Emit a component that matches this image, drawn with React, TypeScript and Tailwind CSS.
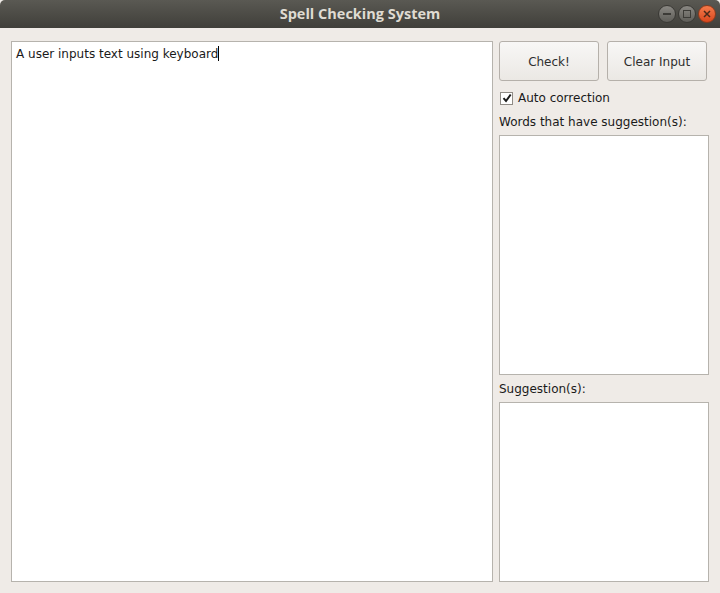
export default function App() {
  const font = { fontFamily: '"DejaVu Sans", sans-serif' };
  return (
    <div className="w-[720px] h-[593px] bg-[#efebe7] flex flex-col overflow-hidden" style={font}>
      <div className="h-[28px] shrink-0 bg-gradient-to-b from-[#5a5953] to-[#403f3a] flex items-center justify-center relative rounded-t-[5px]">
        <span className="text-[14.5px] font-bold text-[#dfdbd2]" style={{ fontFamily: '"Open Sans", sans-serif' }}>Spell Checking System</span>
        <div className="absolute right-[4px] top-[5px] flex gap-[2px]">
          <div className="w-[18px] h-[18px] rounded-full bg-gradient-to-b from-[#8a8883] to-[#5e5d58] border border-[#3a3935] flex items-center justify-center">
            <div className="w-[8px] h-[2px] bg-[#3c3b37]" />
          </div>
          <div className="w-[18px] h-[18px] rounded-full bg-gradient-to-b from-[#8a8883] to-[#5e5d58] border border-[#3a3935] flex items-center justify-center">
            <div className="w-[8px] h-[8px] border-[1.5px] border-[#3c3b37]" />
          </div>
          <div className="w-[18px] h-[18px] rounded-full bg-gradient-to-b from-[#f47a4a] to-[#d9461c] border border-[#8e3a1c] flex items-center justify-center">
            <svg width="8" height="8" viewBox="0 0 8 8"><path d="M1 1L7 7M7 1L1 7" stroke="#4a2a1a" strokeWidth="1.5" /></svg>
          </div>
        </div>
      </div>
      <div className="flex-1 flex pl-[11px] pt-[13px] gap-[6px] items-start">
        <div className="w-[482px] h-[541px] bg-white border border-[#b6b3ad] px-[4px] pt-[4px] text-[12px] leading-[16px] text-[#1a1a1a]">
          <span>A user inputs text using keyboard</span><span className="inline-block w-[1px] h-[15px] bg-black align-[-3px]" />
        </div>
        <div className="w-[210px] flex flex-col">
          <div className="flex gap-[8px]">
            <button className="w-[100px] h-[40px] rounded-[3px] border border-[#b5b0aa] bg-gradient-to-b from-[#f8f7f6] to-[#ebe8e4] text-[12px] leading-[16px] text-[#2e2e2e] pt-[2px]">Check!</button>
            <button className="w-[100px] h-[40px] rounded-[3px] border border-[#b5b0aa] bg-gradient-to-b from-[#f8f7f6] to-[#ebe8e4] text-[12px] leading-[16px] text-[#2e2e2e] pt-[2px]">Clear Input</button>
          </div>
          <div className="flex items-center mt-[10px] h-[14px]">
            <div className="w-[13px] h-[13px] bg-white border border-[#8f8b85] flex items-center justify-center ml-[1px]">
              <svg width="10" height="10" viewBox="0 0 10 10"><path d="M1.5 5.2L4 8L8.7 1.5" fill="none" stroke="#1a1a1a" strokeWidth="2" /></svg>
            </div>
            <span className="ml-[5px] text-[12px] leading-[16px] text-[#1a1a1a]">Auto correction</span>
          </div>
          <div className="mt-[9px] text-[12px] text-[#1a1a1a] leading-[16px]">Words that have suggestion(s):</div>
          <div className="mt-[5px] h-[240px] bg-white border border-[#b6b3ad]" />
          <div className="mt-[6px] text-[12px] text-[#1a1a1a] leading-[16px]">Suggestion(s):</div>
          <div className="mt-[5px] h-[180px] bg-white border border-[#b6b3ad]" />
        </div>
      </div>
    </div>
  );
}
